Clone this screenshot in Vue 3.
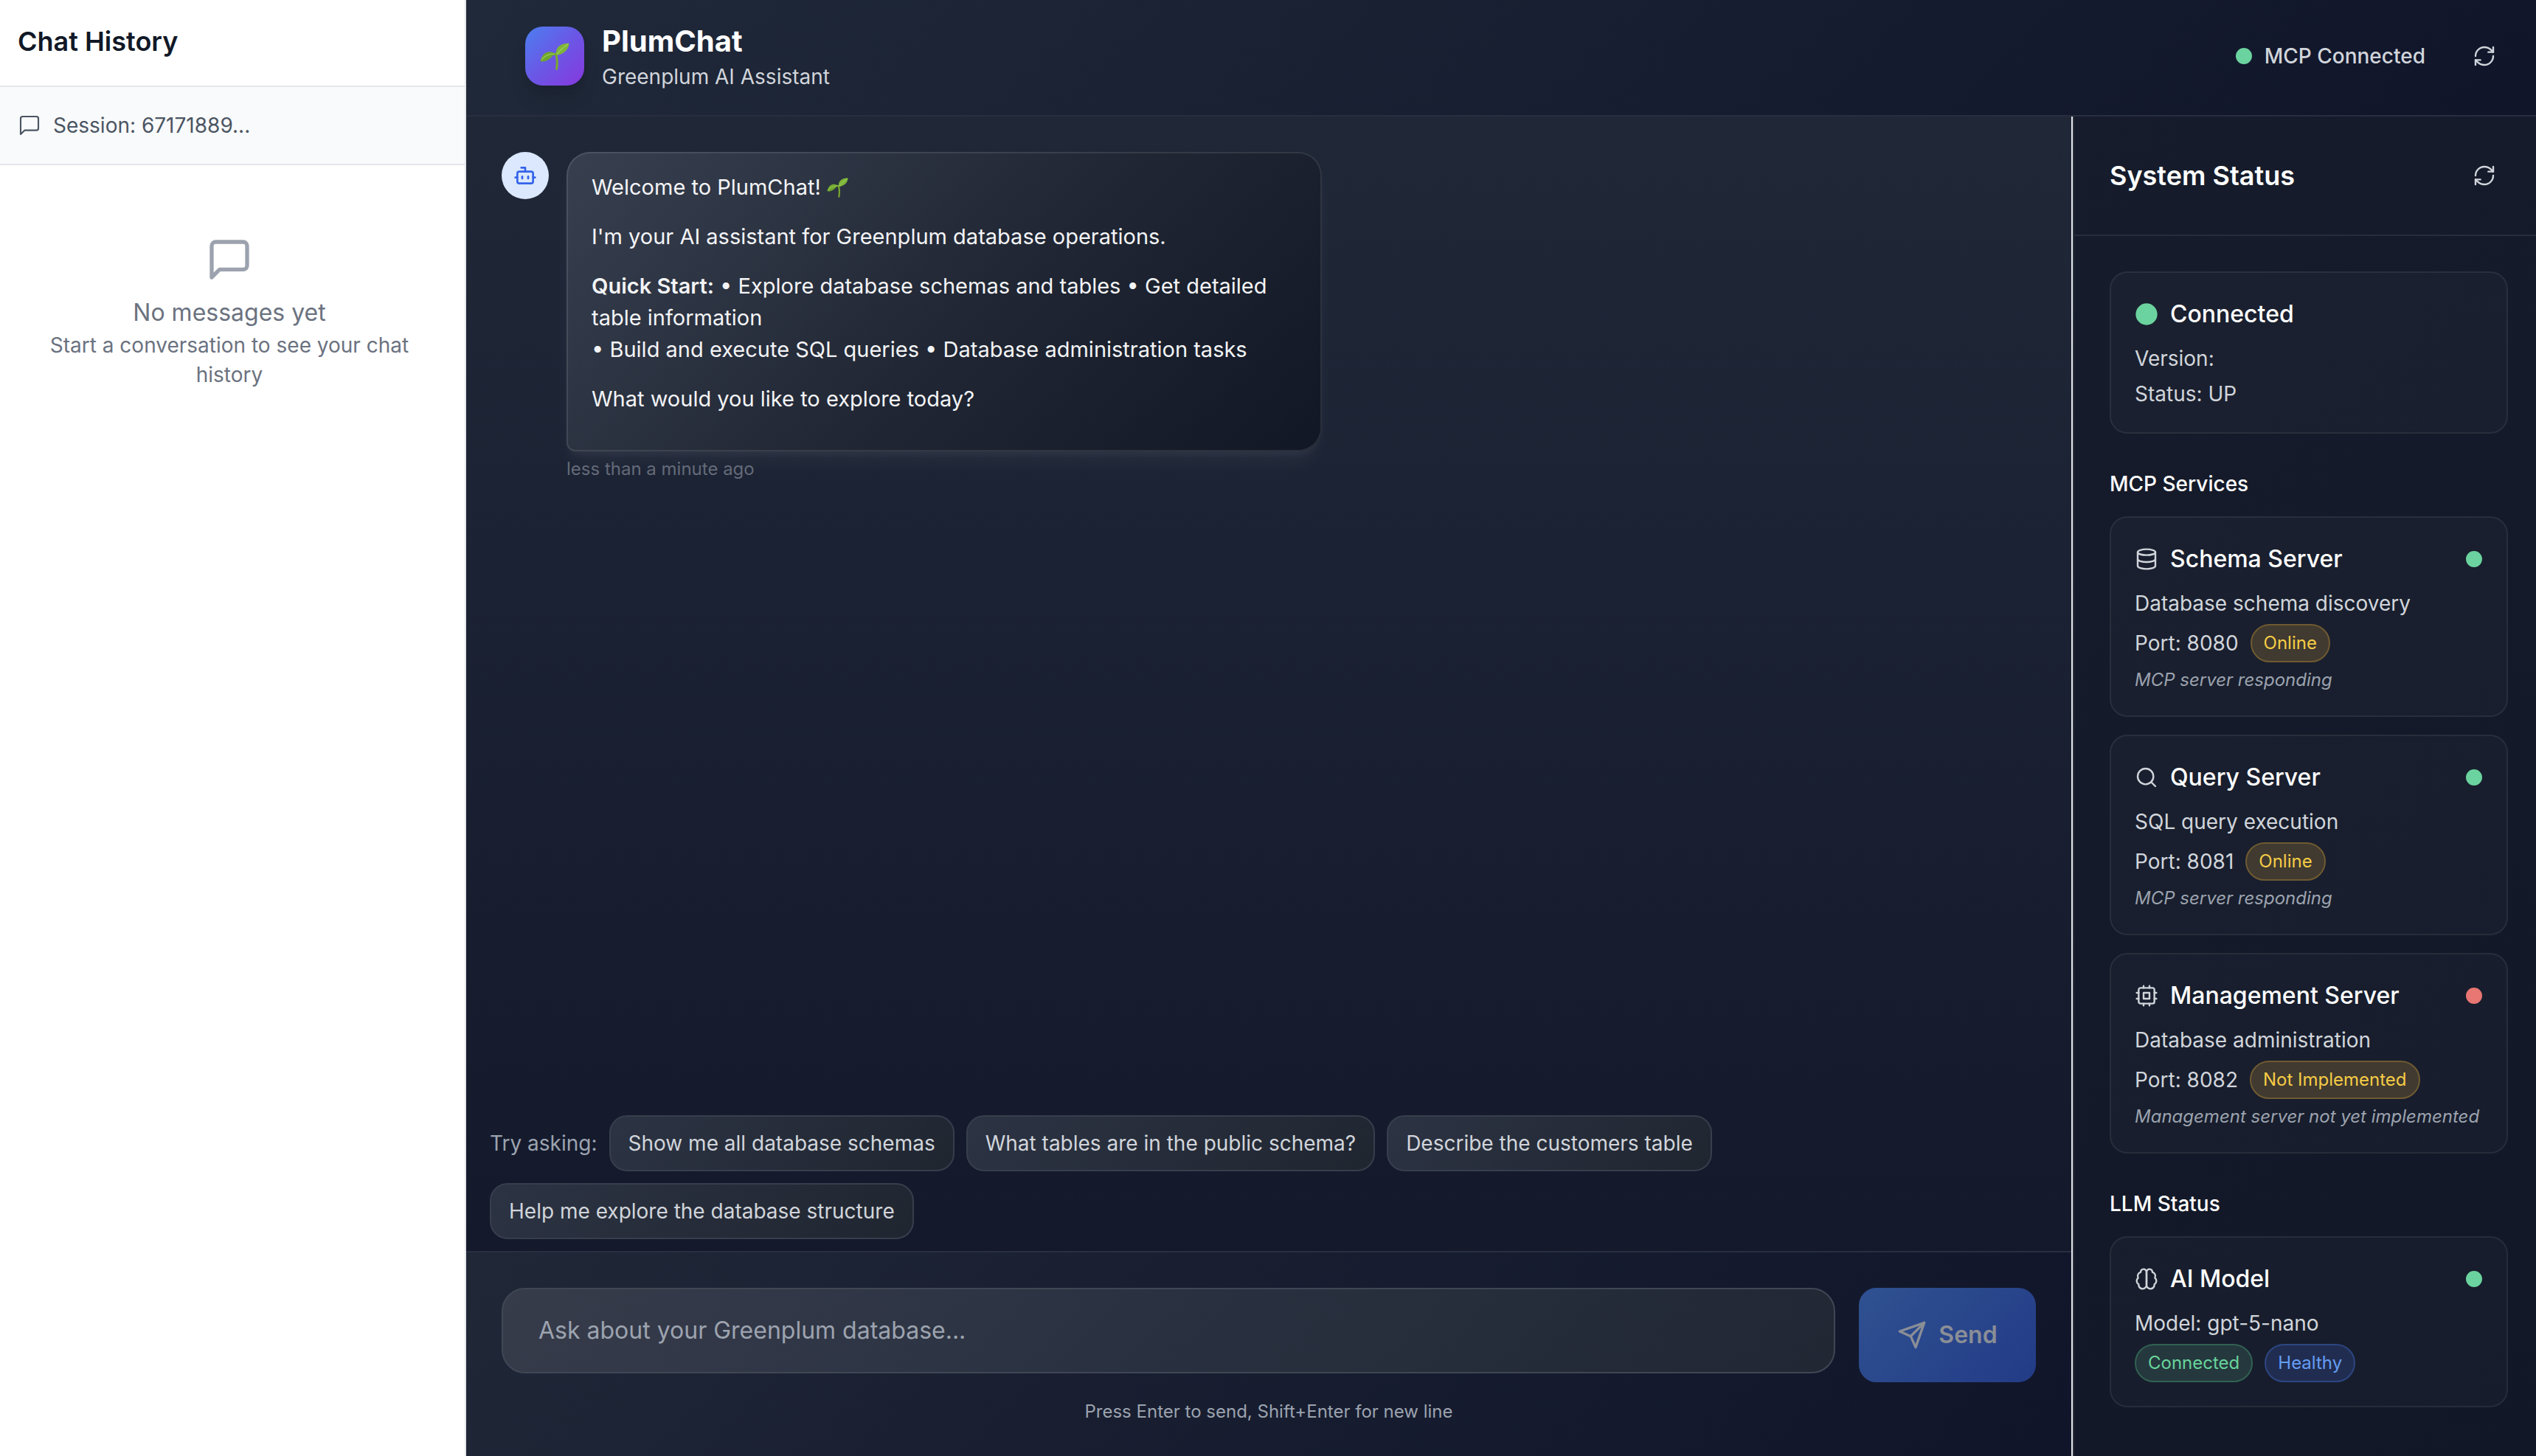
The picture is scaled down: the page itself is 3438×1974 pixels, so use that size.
<script setup>
import { h, ref } from 'vue'

const draft = ref('')

const suggestions = [
  'Show me all database schemas',
  'What tables are in the public schema?',
  'Describe the customers table',
  'Help me explore the database structure',
]

const services = [
  { name: 'Schema Server', icon: 'database', about: 'Database schema discovery', port: 8080, badge: 'Online', note: 'MCP server responding', up: true },
  { name: 'Query Server', icon: 'search', about: 'SQL query execution', port: 8081, badge: 'Online', note: 'MCP server responding', up: true },
  { name: 'Management Server', icon: 'cpu', about: 'Database administration', port: 8082, badge: 'Not Implemented', note: 'Management server not yet implemented', up: false },
]

const shapes = {
  message: ['M21 15a2 2 0 0 1-2 2H7l-4 4V5a2 2 0 0 1 2-2h14a2 2 0 0 1 2 2z'],
  refresh: [
    'M3 12a9 9 0 0 1 9-9 9.75 9.75 0 0 1 6.74 2.74L21 8',
    'M21 3v5h-5',
    'M21 12a9 9 0 0 1-9 9 9.75 9.75 0 0 1-6.74-2.74L3 16',
    'M8 16H3v5',
  ],
  bot: [
    'M12 8V4H8',
    'M6 8h12a2 2 0 0 1 2 2v8a2 2 0 0 1-2 2H6a2 2 0 0 1-2-2v-8a2 2 0 0 1 2-2z',
    'M2 14h2', 'M20 14h2', 'M15 13v2', 'M9 13v2',
  ],
  database: [
    'M3 5a9 3 0 1 0 18 0a9 3 0 1 0-18 0',
    'M3 5v14a9 3 0 0 0 18 0V5',
    'M3 12a9 3 0 0 0 18 0',
  ],
  search: ['M3 11a8 8 0 1 0 16 0a8 8 0 1 0-16 0', 'm21 21-4.3-4.3'],
  cpu: [
    'M6 4h12a2 2 0 0 1 2 2v12a2 2 0 0 1-2 2H6a2 2 0 0 1-2-2V6a2 2 0 0 1 2-2z',
    'M9 9h6v6H9z',
    'M15 2v2', 'M15 20v2', 'M2 15h2', 'M2 9h2', 'M20 15h2', 'M20 9h2', 'M9 2v2', 'M9 20v2',
  ],
  brain: [
    'M12 5a3 3 0 1 0-5.997.125 4 4 0 0 0-2.526 5.77 4 4 0 0 0 .556 6.588A4 4 0 1 0 12 18Z',
    'M12 5a3 3 0 1 1 5.997.125 4 4 0 0 1 2.526 5.77 4 4 0 0 1-.556 6.588A4 4 0 1 1 12 18Z',
  ],
  send: ['m22 2-7 20-4-9-9-4Z', 'M22 2 11 13'],
  dot: ['M2 12a10 10 0 1 0 20 0a10 10 0 1 0-20 0'],
}

const Icon = (props) =>
  h(
    'svg',
    {
      viewBox: '0 0 24 24',
      width: props.size,
      height: props.size,
      fill: props.name === 'dot' ? 'currentColor' : 'none',
      stroke: 'currentColor',
      'stroke-width': props.stroke,
      'stroke-linecap': 'round',
      'stroke-linejoin': 'round',
      'aria-hidden': 'true',
    },
    shapes[props.name].map((d) => h('path', { d })),
  )
Icon.props = { name: String, size: { type: Number, default: 32 }, stroke: { type: Number, default: 2 } }

const Seedling = (props) =>
  h('svg', { viewBox: '0 0 40 37', width: props.width, role: 'img', 'aria-label': 'seedling' }, [
    h('path', { d: 'M21.5 15C24 21 23.5 29 22.6 35.4', fill: 'none', stroke: '#79a82c', 'stroke-width': 3, 'stroke-linecap': 'round' }),
    h('path', { d: 'M22 17C21 7 26 1 39.5 .5C39 9 33 15.5 22 17Z', fill: '#7db53a' }),
    h('path', { d: 'M22.5 15.5C15 10 4 10 .5 25C5 27 14 23 17 17.5C19 16.5 21 16.5 22.5 17Z', fill: '#6fa62f' }),
    h('path', { d: 'M23 15.5C27 10 32 6 38 2M20 15C13 15 6 18 2 23', fill: 'none', stroke: '#a3d15c', 'stroke-width': 1.2 }),
  ])
Seedling.props = { width: Number }
</script>

<template>
  <div class="app">
    <aside class="history">
      <header class="history-head"><h2>Chat History</h2></header>
      <div class="session">
        <Icon name="message" :stroke="1.6" />
        <span>Session: 67171889...</span>
      </div>
      <div class="empty">
        <Icon name="message" :size="64" />
        <p class="empty-title">No messages yet</p>
        <p class="empty-text">Start a conversation to see your chat history</p>
      </div>
    </aside>

    <div class="workspace">
      <header class="topbar">
        <div class="brand">
          <div class="logo"><Seedling :width="40" /></div>
          <div>
            <h1>PlumChat</h1>
            <p>Greenplum AI Assistant</p>
          </div>
        </div>
        <div class="top-actions">
          <div class="connection">
            <Icon class="up" name="dot" :size="24" />
            <span>MCP Connected</span>
          </div>
          <button type="button" class="icon-button" aria-label="Refresh connection"><Icon name="refresh" :stroke="1.8" /></button>
        </div>
      </header>

      <div class="body">
        <main class="chat">
          <section class="messages">
            <article class="message">
              <div class="avatar"><Icon name="bot" /></div>
              <div class="message-main">
                <div class="bubble">
                  <p>Welcome to PlumChat! <Seedling class="inline-seedling" :width="29" /></p>
                  <p>I'm your AI assistant for Greenplum database operations.</p>
                  <p>
                    <strong>Quick Start:</strong> • Explore database schemas and tables • Get detailed table information<br />
                    • Build and execute SQL queries • Database administration tasks
                  </p>
                  <p>What would you like to explore today?</p>
                </div>
                <time>less than a minute ago</time>
              </div>
            </article>
          </section>

          <div class="suggestions">
            <span>Try asking:</span>
            <button v-for="s in suggestions" :key="s" type="button" @click="draft = s">{{ s }}</button>
          </div>

          <form class="composer" @submit.prevent>
            <div class="composer-row">
              <textarea v-model="draft" rows="1" aria-label="Message" placeholder="Ask about your Greenplum database..."></textarea>
              <button type="submit" class="send" :disabled="!draft">
                <Icon name="send" :size="40" />
                <span>Send</span>
              </button>
            </div>
            <p>Press Enter to send, Shift+Enter for new line</p>
          </form>
        </main>

        <aside class="status">
          <header class="status-head">
            <h2>System Status</h2>
            <button type="button" class="icon-button" aria-label="Refresh status"><Icon name="refresh" :stroke="1.8" /></button>
          </header>
          <div class="status-body">
            <section class="card">
              <div class="card-head">
                <Icon class="up" name="dot" />
                <h4>Connected</h4>
              </div>
              <p>Version:</p>
              <p>Status: UP</p>
            </section>

            <section class="group">
              <h3>MCP Services</h3>
              <div v-for="s in services" :key="s.name" class="card">
                <div class="card-head">
                  <Icon :name="s.icon" :stroke="1.8" />
                  <h4>{{ s.name }}</h4>
                  <Icon :class="s.up ? 'up' : 'down'" name="dot" :size="24" />
                </div>
                <p>{{ s.about }}</p>
                <div class="row">
                  <span>Port: {{ s.port }}</span>
                  <span class="badge yellow">{{ s.badge }}</span>
                </div>
                <p class="note">{{ s.note }}</p>
              </div>
            </section>

            <section class="group">
              <h3>LLM Status</h3>
              <div class="card">
                <div class="card-head">
                  <Icon name="brain" :stroke="1.8" />
                  <h4>AI Model</h4>
                  <Icon class="up" name="dot" :size="24" />
                </div>
                <p>Model: gpt-5-nano</p>
                <div class="row">
                  <span class="badge green">Connected</span>
                  <span class="badge blue">Healthy</span>
                </div>
              </div>
            </section>
          </div>
        </aside>
      </div>
    </div>
  </div>
</template>

<style>
body {
  background: #0f1425;
}
</style>

<style scoped>
* {
  box-sizing: border-box;
}
h1, h2, h3, h4, p {
  margin: 0;
}
svg {
  display: block;
  flex: none;
}
button, textarea {
  font: inherit;
  margin: 0;
}
button {
  cursor: pointer;
}
.app {
  display: flex;
  min-height: 100vh;
  font-family: Inter, "Liberation Sans", sans-serif;
  font-size: 28px;
  line-height: 40px;
  color: #d1d5db;
}

/* history */
.history {
  flex: none;
  width: 632px;
  background: #fff;
  border-right: 2px solid #e5e7eb;
  color: #4b5563;
}
.history-head {
  padding: 28px 24px 32px;
  border-bottom: 2px solid #e5e7eb;
}
.history-head h2 {
  font-size: 36px;
  line-height: 56px;
  font-weight: 600;
  color: #111827;
}
.session {
  display: flex;
  align-items: center;
  gap: 16px;
  padding: 32px 24px;
  background: #f9fafb;
  border-bottom: 2px solid #e5e7eb;
}
.empty {
  display: flex;
  flex-direction: column;
  align-items: center;
  padding: 96px 40px 96px 32px;
  color: #6b7280;
  text-align: center;
}
.empty svg {
  color: #9ca3af;
}
.empty-title {
  margin-top: 16px;
  font-size: 32px;
  line-height: 48px;
}

/* top bar */
.workspace {
  flex: 1;
  min-width: 0;
  display: flex;
  flex-direction: column;
}
.topbar {
  display: flex;
  align-items: center;
  justify-content: space-between;
  padding: 28px 38px 32px 80px;
  background: linear-gradient(135deg, #202939, #10152a);
  border-bottom: 2px solid #292e3f;
}
.brand, .top-actions, .connection {
  display: flex;
  align-items: center;
}
.brand {
  gap: 24px;
}
.logo {
  display: grid;
  place-items: center;
  width: 80px;
  height: 80px;
  border-radius: 24px;
  background: linear-gradient(135deg, #4b7ff0, #6b57e6 50%, #8738de);
  box-shadow: 0 20px 30px -6px rgba(0, 0, 0, 0.1), 0 8px 12px -4px rgba(0, 0, 0, 0.1);
}
.brand h1 {
  font-size: 40px;
  line-height: 56px;
  font-weight: 700;
  color: #fff;
}
.top-actions {
  gap: 48px;
}
.connection {
  gap: 16px;
  font-weight: 500;
}
.icon-button {
  padding: 16px;
  border: 0;
  background: none;
  color: #d1d5db;
}
.up {
  color: #6bd39f;
}
.down {
  color: #e87672;
}

/* chat */
.body {
  flex: 1;
  display: flex;
}
.chat {
  flex: 1;
  min-width: 0;
  display: flex;
  flex-direction: column;
  background: linear-gradient(180deg, #202838, #12172a 96%);
}
.messages {
  flex: 1;
  padding: 48px;
}
.message {
  display: flex;
  gap: 24px;
}
.avatar {
  flex: none;
  display: grid;
  place-items: center;
  width: 64px;
  height: 64px;
  border-radius: 50%;
  background: #dbe8fd;
  color: #3563e9;
}
.message-main {
  width: 1024px;
  max-width: 80%;
}
.bubble {
  padding: 24px 32px;
  border: 2px solid rgba(255, 255, 255, 0.1);
  border-radius: 32px 32px 32px 12px;
  background: linear-gradient(135deg, #384050, #202633 55%, #111724) border-box;
  box-shadow: 0 20px 30px -6px rgba(255, 255, 255, 0.05), 0 8px 12px -4px rgba(255, 255, 255, 0.05);
  color: #f3f4f6;
  font-size: 29px;
  line-height: 43px;
}
.bubble p {
  margin-bottom: 24px;
}
.bubble strong {
  font-weight: 600;
}
.inline-seedling {
  display: inline-block;
  vertical-align: -4px;
}
time {
  display: block;
  margin-top: 8px;
  font-size: 24px;
  line-height: 32px;
  color: #646a78;
}
.suggestions {
  display: flex;
  flex-wrap: wrap;
  align-items: center;
  gap: 16px;
  padding: 0 32px 16px;
  color: #9ca3af;
}
.suggestions button {
  padding: 16px 24px;
  border: 2px solid #373e4c;
  border-radius: 24px;
  background: linear-gradient(135deg, #2c3343, #202630);
  color: #d1d5db;
}
.composer {
  padding: 48px 48px 44px;
  border-top: 2px solid #292f40;
  background: linear-gradient(135deg, #202838, #191f31 40%, #10152a);
}
.composer-row {
  display: flex;
  align-items: flex-start;
  gap: 32px;
}
textarea {
  flex: 1;
  min-width: 0;
  height: 116px;
  padding: 32px 48px;
  border: 2px solid #404754;
  border-radius: 32px;
  background: linear-gradient(135deg, #373c4b, #293140 50%, #212733);
  color: #f3f4f6;
  font-size: 32px;
  line-height: 48px;
  resize: none;
  overflow: hidden;
}
textarea::placeholder {
  color: #9ca3af;
  opacity: 1;
}
.send {
  display: flex;
  align-items: center;
  justify-content: center;
  gap: 16px;
  width: 240px;
  height: 128px;
  padding: 0;
  border: 0;
  border-radius: 24px;
  background: linear-gradient(135deg, #2f5191, #233b86);
  color: #8a8e96;
  font-size: 32px;
  line-height: 48px;
  font-weight: 600;
}
.composer p {
  margin-top: 24px;
  font-size: 24px;
  line-height: 32px;
  text-align: center;
  color: #9ca3af;
}

/* status panel */
.status {
  flex: none;
  width: 630px;
  border-left: 2px solid #e5e7eb;
  box-shadow: inset 2px 0 #292f3d;
  background: linear-gradient(135deg, #161c2b, #111726);
}
.status-head {
  display: flex;
  align-items: center;
  justify-content: space-between;
  margin-left: 2px;
  padding: 48px 38px 48px 48px;
  border-bottom: 2px solid #262c3a;
}
.status-head h2 {
  font-size: 36px;
  line-height: 56px;
  font-weight: 600;
  color: #fff;
}
.status-body {
  display: flex;
  flex-direction: column;
  gap: 48px;
  padding: 48px 38px 48px 50px;
}
.group {
  display: flex;
  flex-direction: column;
  gap: 24px;
}
.group h3 {
  font-size: 28px;
  line-height: 40px;
  font-weight: 500;
  color: #fff;
}
.card {
  display: flex;
  flex-direction: column;
  gap: 8px;
  padding: 32px;
  border: 2px solid rgba(255, 255, 255, 0.07);
  border-radius: 24px;
  background: rgba(255, 255, 255, 0.025);
}
.card-head {
  display: flex;
  align-items: center;
  gap: 16px;
  margin-bottom: 8px;
}
.card-head h4 {
  flex: 1;
  font-size: 32px;
  line-height: 48px;
  font-weight: 500;
  color: #fff;
}
.row {
  display: flex;
  align-items: center;
  gap: 16px;
}
.badge {
  padding: 8px 16px;
  border: 2px solid;
  border-radius: 26px;
  font-size: 24px;
  line-height: 32px;
}
.yellow {
  color: #f6cc46;
  background: #403a30;
  border-color: #6f5a31;
}
.green {
  color: #68d39b;
  background: #25383e;
  border-color: #316152;
}
.blue {
  color: #659df5;
  background: #212d50;
  border-color: #2c4682;
}
.note {
  font-size: 24px;
  line-height: 32px;
  font-style: italic;
  color: #9ca3af;
}
</style>
